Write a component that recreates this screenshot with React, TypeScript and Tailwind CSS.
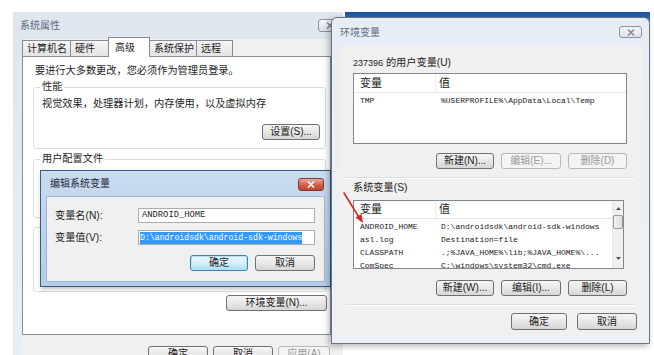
import React from 'react';

const cjk = "font-['Liberation_Sans','Noto_Sans_CJK_SC',sans-serif]";
const mono = "font-['Liberation_Mono','Noto_Sans_CJK_SC',monospace]";

interface BtnProps {
  label: string;
  className?: string;
  disabled?: boolean;
  focused?: boolean;
}

const Btn: React.FC<BtnProps> = ({ label, className = '', disabled, focused }) => {
  let look = 'border-[#707070] bg-linear-to-b from-[#f6f6f6] via-[#e8e8e8] to-[#d6d6d6] text-[#1a1a1a]';
  if (disabled) look = 'border-[#b5b9bc] bg-[#f4f4f4] text-[#9a9a9a]';
  if (focused) look = 'border-[#3c7fb1] bg-linear-to-b from-[#eaf6fd] via-[#d9f0fc] to-[#a7d9f5] text-[#1a1a1a] shadow-[inset_0_0_0_1px_#b6e2fb]';
  return (
    <div className={`h-[16px] border rounded-[3px] flex items-center justify-center text-[10px] leading-none whitespace-nowrap ${look} ${className}`}>
      {label}
    </div>
  );
};

const Tab: React.FC<{ label: string; w: string; active?: boolean }> = ({ label, w, active }) => (
  <div
    className={
      active
        ? `${w} h-[20px] -mb-px z-10 bg-white border border-b-0 border-[#898c95] flex items-center pl-[6px] text-[10px] whitespace-nowrap text-[#222]`
        : `${w} h-[16px] -ml-px first:ml-0 bg-linear-to-b from-[#f5f5f5] to-[#e4e4e4] border border-b-0 border-[#898c95] flex items-center pl-[4px] text-[10px] whitespace-nowrap text-[#222]`
    }
  >
    {label}
  </div>
);

const Close: React.FC<{ className: string }> = ({ className }) => (
  <div className={`border border-[#8a929c] rounded-[3px] bg-linear-to-b from-[#f4f6f8] to-[#dde2e8] flex items-center justify-center ${className}`}>
    <svg width="8" height="7" viewBox="0 0 8 7">
      <path d="M1 0.5 L7 6.5 M7 0.5 L1 6.5" stroke="#7c8590" strokeWidth="1.4" />
    </svg>
  </div>
);

// list of variables inside the env window
const ListHead: React.FC = () => (
  <div className="h-[19px] flex items-center border-b border-[#e5e5e5] text-[11px] text-[#222]">
    <div className="w-[82px] pl-[6px] border-r border-[#ececec] h-full flex items-center">变量</div>
    <div className="pl-[3px]">值</div>
  </div>
);

const Row: React.FC<{ name: string; value: string }> = ({ name, value }) => (
  <div className={`h-[13px] flex items-center text-[8px] text-[#1a1a1a] whitespace-nowrap ${mono}`}>
    <div className="w-[82px] pl-[6px]">{name}</div>
    <div className="pl-[5px]">{value}</div>
  </div>
);

export default function App() {
  return (
    <div className={`relative w-[654px] h-[355px] overflow-hidden bg-white ${cjk}`}>
      {/* System properties window */}
      <div className="absolute left-[13px] top-[12px] w-[330px] h-[350px] bg-linear-to-b from-[#dfe6ee] to-[#e9eef3] flex flex-col">
        <div className="h-[28px] flex items-center pl-[7px] text-[10px] text-[#5d6d80]">系统属性</div>
        <Close className="absolute left-[305px] top-[7px] w-[24px] h-[13px]" />
        <div className="flex-1 ml-[9px] bg-[#f0f0f0] flex flex-col">
          <div className="h-[17px] flex items-end">
            <Tab label="计算机名" w="w-[49px]" />
            <Tab label="硬件" w="w-[39px]" />
            <Tab label="高级" w="w-[42px] -ml-px" active />
            <Tab label="系统保护" w="w-[48px]" />
            <Tab label="远程" w="w-[37px]" />
          </div>
          <div className="w-[309px] h-[279px] border border-[#898c95] bg-white flex flex-col pt-[7px] text-[10.2px] text-[#1e1e1e]">
            <div className="pl-[12px] leading-[14px]">要进行大多数更改，您必须作为管理员登录。</div>
            <fieldset className="mt-[2px] ml-[10px] mr-[4px] border border-[#d5dfe5] rounded-[3px] pl-[6px] pr-[5px] pb-[8px] flex flex-col">
              <legend className="px-[2px] leading-[14px]">性能</legend>
              <div className="mt-[3px] pl-[2px] leading-[14px]">视觉效果，处理器计划，内存使用，以及虚拟内存</div>
              <Btn label="设置(S)..." className="mt-[13px] self-end w-[58px]" />
            </fieldset>
            <fieldset className="mt-[3px] ml-[10px] mr-[4px] h-[66px] border border-[#d5dfe5] rounded-[3px] pl-[6px] pr-[5px]">
              <legend className="px-[2px] leading-[14px]">用户配置文件</legend>
            </fieldset>
            <div className="mt-[9px] ml-[10px] mr-[4px] h-[65px] border border-[#d5dfe5] rounded-[3px]" />
            <Btn label="环境变量(N)..." className="mt-[3px] mr-[3px] self-end w-[101px]" />
          </div>
          <div className="mt-[11px] flex gap-[5px] pl-[126px]">
            <Btn label="确定" className="w-[60px]" />
            <Btn label="取消" className="w-[60px]" />
            <Btn label="应用(A)" className="w-[52px]" disabled />
          </div>
        </div>
      </div>

      {/* Edit system variable dialog */}
      <div className="absolute left-[40px] top-[170px] w-[291px] h-[117px] border border-[#3a5a80] bg-linear-to-b from-[#c9dbef] to-[#b3cce8] flex flex-col shadow-[1px_2px_4px_rgba(0,0,0,0.25)]">
        <div className="h-[25px] flex items-center pl-[9px] text-[10px] text-[#1b2a3c]">编辑系统变量</div>
        <div className="absolute left-[257px] top-[7px] w-[26px] h-[13px] rounded-[3px] border border-[#7a3a32] bg-linear-to-b from-[#e9a99c] via-[#d3634f] to-[#c0402c] flex items-center justify-center">
          <svg width="8" height="7" viewBox="0 0 8 7">
            <path d="M1 0.5 L7 6.5 M7 0.5 L1 6.5" stroke="#fff" strokeWidth="1.6" />
          </svg>
        </div>
        <div className="flex-1 ml-[5px] mr-[5px] mb-[4px] bg-[#f0f0f0] border border-[#9fb6d0] flex flex-col text-[10.2px] text-[#1e1e1e]">
          <div className="mt-[11px] flex items-center">
            <div className="w-[91px] pl-[8px]">变量名(N):</div>
            <div className={`w-[177px] h-[15px] bg-white border border-[#abadb3] flex items-center pl-[3px] text-[8.8px] ${mono}`}>ANDROID_HOME</div>
          </div>
          <div className="mt-[7px] flex items-center">
            <div className="w-[91px] pl-[8px]">变量值(V):</div>
            <div className={`w-[177px] h-[15px] bg-white border border-[#abadb3] flex items-center pl-px text-[8.2px] ${mono}`}>
              <span className="bg-[#3399ff] text-white leading-[12px]">D:\androidsdk\android-sdk-windows</span>
            </div>
          </div>
          <div className="mt-[9px] flex justify-end gap-[7px] pr-[9px]">
            <Btn label="确定" className="w-[58px]" focused />
            <Btn label="取消" className="w-[60px]" />
          </div>
        </div>
      </div>

      {/* title bar of a window behind */}
      <div className="absolute left-[345px] top-[12px] w-[305px] h-[10px] bg-linear-to-b from-[#1d4f9c] to-[#3b78c8]" />

      {/* Environment variables window */}
      <div className="absolute left-[331px] top-[17px] w-[319px] h-[327px] border border-[#6a7380] rounded-t-[6px] bg-linear-to-b from-[#e7edf4] to-[#eef2f6] flex flex-col shadow-[-2px_2px_6px_rgba(0,0,0,0.3)]">
        <div className="h-[28px] flex items-center pl-[8px] text-[10px] text-[#5d6d80]">环境变量</div>
        <Close className="absolute left-[287px] top-[8px] w-[23px] h-[12px]" />
        <div className="flex-1 mx-[7px] mb-[7px] bg-[#f0f0f0] flex flex-col text-[10.2px] text-[#1e1e1e]">
          <div className="mt-[10px] pl-[14px] leading-[14px]">
            <span className="text-[9px]">237396</span> 的用户变量(U)
          </div>
          <div className="mt-[3px] ml-[14px] w-[274px] h-[71px] border border-[#828790] bg-white flex flex-col">
            <ListHead />
            <div className="pt-px">
              <Row name="TMP" value="%USERPROFILE%\AppData\Local\Temp" />
            </div>
          </div>
          <div className="mt-[9px] flex justify-end gap-[7px] pr-[15px]">
            <Btn label="新建(N)..." className="w-[58px]" />
            <Btn label="编辑(E)..." className="w-[60px]" disabled />
            <Btn label="删除(D)" className="w-[59px]" disabled />
          </div>
          <div className="mt-[8px] mx-[7px] h-[2px] border-t border-[#d5dfe5] border-b border-b-white" />
          <div className="mt-[2px] pl-[14px] leading-[14px]">系统变量(S)</div>
          <div className="mt-[5px] ml-[14px] w-[271px] h-[69px] border border-[#828790] bg-white flex overflow-hidden">
            <div className="flex-1 flex flex-col overflow-hidden">
              <ListHead />
              <div className="pt-[2px]">
                <Row name="ANDROID_HOME" value="D:\androidsdk\android-sdk-windows" />
                <Row name="asl.log" value="Destination=file" />
                <Row name="CLASSPATH" value=" .;%JAVA_HOME%\lib;%JAVA_HOME%\..." />
                <Row name="ComSpec" value="C:\windows\system32\cmd.exe" />
              </div>
            </div>
            <div className="w-[11px] bg-[#f0f0f0] flex flex-col items-center border-l border-[#e8e8e8]">
              <svg width="7" height="9" viewBox="0 0 7 9" className="mt-[3px]">
                <path d="M1 6 L3.5 3 L6 6 Z" fill="#555" />
              </svg>
              <div className="mt-[2px] w-[10px] h-[14px] rounded-[2px] border border-[#9a9a9a] bg-linear-to-r from-[#f2f2f2] to-[#dcdcdc]" />
              <div className="flex-1" />
              <svg width="7" height="9" viewBox="0 0 7 9" className="mb-[5px]">
                <path d="M1 3 L3.5 6 L6 3 Z" fill="#555" />
              </svg>
            </div>
          </div>
          <div className="mt-[11px] flex justify-end gap-[7px] pr-[15px]">
            <Btn label="新建(W)..." className="w-[58px]" />
            <Btn label="编辑(I)..." className="w-[60px]" />
            <Btn label="删除(L)" className="w-[59px]" />
          </div>
          <div className="mt-[8px] mx-[7px] h-[2px] border-t border-[#d5dfe5] border-b border-b-white" />
          <div className="mt-[7px] flex justify-end gap-[10px] pr-[5px]">
            <Btn label="确定" className="w-[56px] h-[17px]" />
            <Btn label="取消" className="w-[60px] h-[17px]" />
          </div>
        </div>
      </div>

      {/* red pointer arrow */}
      <svg className="absolute left-[340px] top-[190px]" width="30" height="36" viewBox="0 0 30 36">
        <path d="M4 3 L20 29" stroke="#d8262b" strokeWidth="1.6" strokeLinecap="round" />
        <path d="M23 33 L15.5 27.5 L21.5 24 Z" fill="#d8262b" />
      </svg>
    </div>
  );
}
